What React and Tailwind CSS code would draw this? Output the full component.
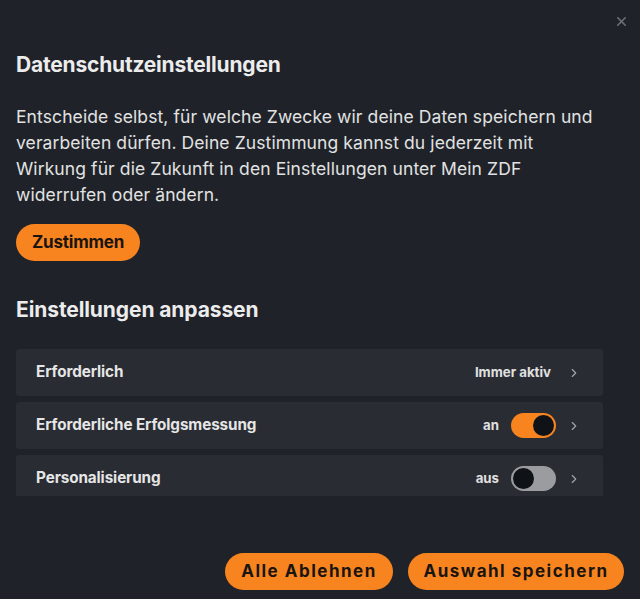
import { ChevronRight, X } from 'lucide-react'

const rows = [
  { label: 'Erforderlich', status: 'Immer aktiv', toggle: null },
  { label: 'Erforderliche Erfolgsmessung', status: 'an', toggle: true },
  { label: 'Personalisierung', status: 'aus', toggle: false },
]

const Toggle = ({ on }) => (
  <div
    className={`w-[45px] h-[25px] rounded-full p-[2px] flex items-center ${
      on ? 'bg-[#f7841f] justify-end' : 'bg-[#9a9c9f] justify-start'
    }`}
  >
    <div className="w-[21px] h-[21px] rounded-full bg-[#0f1216]" />
  </div>
)

export default function App() {
  return (
    <div
      className="h-[599px] w-[640px] bg-[#1f2229] text-[#e8e8e8] flex flex-col overflow-hidden"
      style={{ fontFamily: 'Inter, "Noto Sans", sans-serif' }}
    >
      <div className="flex justify-end pt-[14px] pr-[11px] h-[40px]">
        <X className="w-[15px] h-[15px] text-[#6e7176]" strokeWidth={2.5} />
      </div>

      <div className="flex-1 min-h-0 overflow-hidden pl-4 pr-[37px]">
        <h1 className="text-[21px] font-bold text-[#ececec] mt-[11px] leading-[28px] tracking-[-0.2px]">
          Datenschutzeinstellungen
        </h1>
        <p className="mt-[25px] text-[17.5px] leading-[26px] text-[#e2e2e2] tracking-[0.1px]">
          Entscheide selbst, für welche Zwecke wir deine Daten speichern und verarbeiten dürfen. Deine Zustimmung kannst du jederzeit mit Wirkung für die Zukunft in den Einstellungen unter Mein ZDF widerrufen oder ändern.
        </p>
        <button className="mt-[16px] h-[37px] px-[16px] rounded-full bg-[#f7841f] text-[#1a1410] font-bold text-[17px] tracking-[-0.2px]">
          Zustimmen
        </button>
        <h2 className="mt-[35px] text-[21px] font-bold text-[#ececec] leading-[28px] tracking-[-0.1px]">
          Einstellungen anpassen
        </h2>
        <div className="mt-[25px] flex flex-col gap-[6px]">
          {rows.map((r) => (
            <div
              key={r.label}
              className="h-[47px] bg-[#292c33] rounded-[3px] flex items-center pl-5 pr-[22px]"
            >
              <span className="flex-1 font-bold text-[15.25px] text-[#e6e6e6] tracking-[-0.1px]">
                {r.label}
              </span>
              <span className={`font-bold text-[13.25px] text-[#e0e0e0] ${r.toggle === null ? 'mr-[5px]' : ''}`}>
                {r.status}
              </span>
              {r.toggle !== null && (
                <div className="ml-[12px]">
                  <Toggle on={r.toggle} />
                </div>
              )}
              <ChevronRight className="ml-[11px] w-[14px] h-[14px] text-[#a0a3a8]" strokeWidth={2} />
            </div>
          ))}
        </div>
      </div>

      <div className="h-[103px] flex items-end justify-end gap-[15px] pr-[16px] pb-[9px]">
        <button className="h-[37px] w-[168px] rounded-full bg-[#f7841f] text-[#1a1410] font-bold text-[17px] tracking-[1.5px]">
          Alle Ablehnen
        </button>
        <button className="h-[37px] w-[216px] rounded-full bg-[#f7841f] text-[#1a1410] font-bold text-[17px] tracking-[1.5px]">
          Auswahl speichern
        </button>
      </div>
    </div>
  )
}
